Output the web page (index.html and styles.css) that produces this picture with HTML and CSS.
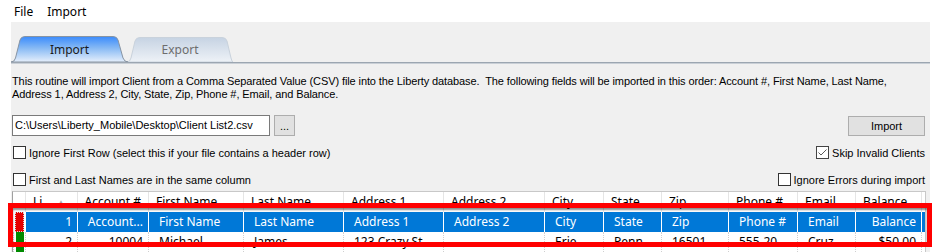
FILE: index.html
```html
<!DOCTYPE html>
<html>
<head>
<meta charset="utf-8">
<link rel="stylesheet" href="styles.css">
</head>
<body>
<div class="menubar"><span class="menu-item">File</span><span class="menu-item">Import</span></div>
<div class="panel">
  <div class="tabs">
    <div class="tab tab-active">
      <svg class="tab-shape" viewBox="0 0 117 26" preserveAspectRatio="none">
        <defs>
          <linearGradient id="ga" x1="0" y1="0" x2="0" y2="1">
            <stop offset="0" stop-color="#3a8bfc"/>
            <stop offset="0.45" stop-color="#86b9f4"/>
            <stop offset="1" stop-color="#e6effb"/>
          </linearGradient>
        </defs>
        <path d="M0 26 Q3.5 26 4.5 22 L9 4 Q10 0.5 14 0.5 L102 0.5 Q106 0.5 107 4 L112 22 Q113.5 26 117 26 Z" fill="url(#ga)" stroke="#8794a3" stroke-width="1"/>
      </svg>
      <span class="tab-label">Import</span>
    </div>
    <div class="tab tab-inactive">
      <svg class="tab-shape" viewBox="0 0 106 26" preserveAspectRatio="none">
        <defs>
          <linearGradient id="gi" x1="0" y1="0" x2="0" y2="1">
            <stop offset="0" stop-color="#c6d3e3"/>
            <stop offset="1" stop-color="#eef2f7"/>
          </linearGradient>
        </defs>
        <path d="M0 26 Q3 26 4 22 L8 5 Q9 1.5 13 1.5 L95 1.5 Q99 1.5 100 5 L104 22 Q105 26 106 26 Z" fill="url(#gi)" stroke="#c9d2dc" stroke-width="1"/>
      </svg>
      <span class="tab-label">Export</span>
    </div>
  </div>
  <div class="tab-line"></div>
  <p class="desc">This routine will import Client from a Comma Separated Value (CSV) file into the Liberty database.&nbsp; The following fields will be imported in this order: Account #, First Name, Last Name,<br>Address 1, Address 2, City, State, Zip, Phone #, Email, and Balance.</p>
  <div class="file-row">
    <div class="path-box">C:\Users\Liberty_Mobile\Desktop\Client List2.csv</div>
    <button class="btn btn-browse">...</button>
    <button class="btn btn-import">Import</button>
  </div>
  <div class="opt-row opt-first">
    <label class="chk"><span class="box"></span>Ignore First Row (select this if your file contains a header row)</label>
    <label class="chk"><span class="box box-checked"><svg viewBox="0 0 11 11" class="tick"><polyline points="1.5,5.5 4,8 9.5,2.5" fill="none" stroke="#5a5a5a" stroke-width="1"/></svg></span>Skip Invalid Clients</label>
  </div>
  <div class="opt-row opt-second">
    <label class="chk"><span class="box"></span>First and Last Names are in the same column</label>
    <label class="chk"><span class="box"></span>Ignore Errors during import</label>
  </div>
  <div class="grid">
    <div class="row head">
      <div class="c ind"></div>
      <div class="c li"><span>Li</span><span class="arrow">▲</span></div>
      <div class="c r">Account #</div>
      <div class="c">First Name</div>
      <div class="c">Last Name</div>
      <div class="c">Address 1</div>
      <div class="c">Address 2</div>
      <div class="c">City</div>
      <div class="c">State</div>
      <div class="c hz">Zip</div>
      <div class="c">Phone #</div>
      <div class="c">Email</div>
      <div class="c">Balance</div>
      <div class="c"></div>
    </div>
    <div class="row sel">
      <div class="c ind"><span class="flag flag-red"></span></div>
      <div class="c r">1</div>
      <div class="c r">Account...</div>
      <div class="c">First Name</div>
      <div class="c">Last Name</div>
      <div class="c">Address 1</div>
      <div class="c">Address 2</div>
      <div class="c">City</div>
      <div class="c">State</div>
      <div class="c">Zip</div>
      <div class="c">Phone #</div>
      <div class="c">Email</div>
      <div class="c r">Balance</div>
      <div class="c blank"></div>
    </div>
    <div class="row plain">
      <div class="c ind"><span class="flag flag-green"></span></div>
      <div class="c r">2</div>
      <div class="c r">10004</div>
      <div class="c">Michael</div>
      <div class="c">James</div>
      <div class="c">123 Crazy St</div>
      <div class="c"></div>
      <div class="c">Erie</div>
      <div class="c">Penn.</div>
      <div class="c">16501</div>
      <div class="c">555-20...</div>
      <div class="c">Cruz...</div>
      <div class="c r">$50.00</div>
      <div class="c blank"></div>
    </div>
  </div>
</div>
<div class="annot"></div>
</body>
</html>
```
FILE: styles.css
```css
body {
  margin: 0;
  background: #ffffff;
  font-family: "Liberation Sans", Arial, sans-serif;
  font-size: 11px;
  color: #000;
  position: relative;
  width: 938px;
  height: 252px;
  overflow: hidden;
}

.menubar {
  height: 22px;
  display: flex;
  align-items: center;
  gap: 14px;
  padding-left: 14px;
  font-family: "Noto Sans", sans-serif;
  font-size: 12px;
}

.panel {
  margin-left: 11px;
  width: 919px;
  height: 230px;
  background: #f0f0f0;
}

.tabs {
  display: flex;
  padding-top: 14px;
  height: 26px;
}

.tab {
  position: relative;
  height: 26px;
  display: flex;
  align-items: center;
  justify-content: center;
  font-family: "Noto Sans", sans-serif;
  font-size: 12px;
}

.tab-shape {
  position: absolute;
  left: 0;
  top: 0;
  width: 100%;
  height: 100%;
}

.tab-label {
  position: relative;
  padding-top: 1px;
}

.tab-active {
  width: 117px;
  z-index: 1;
  color: #1a1a1a;
}

.tab-inactive {
  width: 106px;
  margin-left: -1px;
  color: #6d6d6d;
}

.tab-line {
  height: 0;
  border-top: 1px solid #9ca6b1;
  border-bottom: 1px solid #c9cfd6;
}

.desc {
  margin: 11px 0 0 1px;
  line-height: 13px;
  white-space: nowrap;
  letter-spacing: -0.1px;
}

.file-row {
  display: flex;
  align-items: flex-start;
  margin-top: 14px;
  height: 21px;
  padding: 0 5px 0 1px;
}

.path-box {
  width: 258px;
  height: 21px;
  box-sizing: border-box;
  border: 1px solid #7a7a7a;
  background: #fff;
  padding-left: 2px;
  line-height: 19px;
  white-space: nowrap;
}

.btn {
  font: inherit;
  color: #000;
  padding: 0;
  box-sizing: border-box;
  border: 1px solid #adadad;
  background: #e1e1e1;
}

.btn-browse {
  margin-left: 4px;
  width: 21px;
  height: 21px;
}

.btn-import {
  margin-left: auto;
  margin-top: 1px;
  width: 77px;
  height: 20px;
}

.opt-row {
  display: flex;
  justify-content: space-between;
  align-items: center;
  height: 17px;
  padding: 0 5px 0 2px;
}

.opt-first { margin-top: 8px; }
.opt-second { margin-top: 10px; }

.chk {
  display: flex;
  align-items: center;
  gap: 3px;
  white-space: nowrap;
}

.box {
  width: 13px;
  height: 13px;
  box-sizing: border-box;
  border: 1px solid #333;
  background: #fff;
  display: flex;
}

.box-checked { border-color: #444; }

.tick {
  width: 11px;
  height: 11px;
}

.grid {
  margin: 3px 0 0 1px;
  width: 914px;
  box-sizing: border-box;
  border-left: 1px solid #a0a0a0;
  border-top: 1px solid #c8c8c8;
  border-right: 1px solid #c8c8c8;
  font-family: "Noto Sans", sans-serif;
  font-size: 12px;
}

.row {
  display: grid;
  grid-template-columns: 12px 52px 71px 95px 100px 100px 101px 59px 58px 67px 69px 58px 66px 1fr;
  height: 20px;
}

.c {
  box-sizing: border-box;
  border-left: 1px solid #e5e5e5;
  padding: 0 4px 0 10px;
  line-height: 20px;
  white-space: nowrap;
  overflow: hidden;
}

.c.ind { border-left: none; padding: 0; display: flex; align-items: stretch; }

.c.r { text-align: right; padding: 0 5px 0 4px; }

.head { background: #fff; }
.head .c { padding-left: 7px; }
.head .c.r { padding-left: 4px; padding-right: 7px; }
.head .li { display: flex; justify-content: space-between; padding-right: 12px; }
.arrow { font-size: 8px; color: #a8a8a8; }

.sel {
  background: #0078d7;
  color: #fff;
}
.sel .c { border-left-color: #fff; }
.sel .c.ind { background: #fff; }

.plain { background: #fff; }
.plain .c { border-left: 1px dotted #cfcfcf; }

.flag {
  display: block;
  margin: 0 1px 0 2px;
  flex: 1;
  box-sizing: border-box;
}

.flag-red {
  background: #e60000;
  border: 1px dotted #d8d8d8;
}

.flag-green {
  background: #008a00;
}

.annot {
  position: absolute;
  left: 8px;
  top: 203px;
  width: 924px;
  height: 44px;
  box-sizing: border-box;
  border: 5px solid #f00;
  box-shadow: inset 0 2px 2px rgba(0, 0, 0, 0.45);
}
```
